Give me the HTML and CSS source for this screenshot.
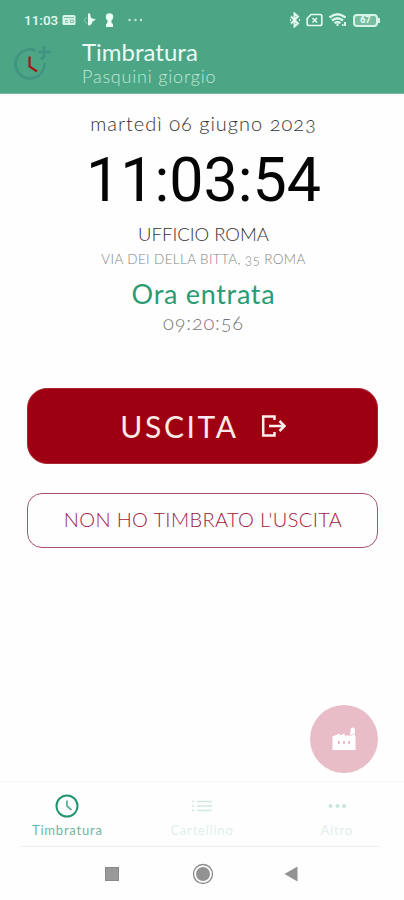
FILE: index.html
```html
<!DOCTYPE html>
<html lang="it">
<head>
    <meta charset="UTF-8">
    <meta name="viewport" content="width=device-width, initial-scale=1.0">
    <title>Timbratura</title>
    <link rel="stylesheet" href="styles.css">
</head>
<body>
    <div class="app">
        <header>
            <div class="status-bar">
                <div class="status-left">
                    <span class="status-time">11:03</span>
                    <svg width="14" height="12" viewBox="0 0 14 12">
                        <rect x="0.5" y="1" width="13" height="10" rx="1.5" fill="#d5f3e6"/>
                        <path d="M2 3.500h10M3 6.500h3M3 8.500h3M8.500 6h3v2.500h-3z" stroke="#7cc0a5" fill="none"/>
                    </svg>
                    <svg class="bird" width="13" height="14" viewBox="0 0 13 14">
                        <path d="M5 0.500l2 0 1 4.500 5 1.500-3.500 2c-.5 3-2.500 4-4.500 4z" fill="#e9fff6"/>
                        <path d="M4 4l-3 3 3 4" stroke="#86c9af" fill="none"/>
                    </svg>
                    <svg class="keyhole" width="9" height="14" viewBox="0 0 9 14">
                        <circle cx="4.500" cy="4" r="3.700" fill="#eafff6"/>
                        <path d="M2.500 6h4v4l1.500 1v3H1v-3l1.500-1z" fill="#eafff6"/>
                    </svg>
                    <svg class="more" width="15" height="4" viewBox="0 0 15 4" fill="#c5ead9">
                        <circle cx="1.500" cy="2" r="1.200"/>
                        <circle cx="7.500" cy="2" r="1.200"/>
                        <circle cx="13" cy="2" r="1.200"/>
                    </svg>
                </div>
                <div class="status-right">
                    <svg width="12" height="16" viewBox="0 0 12 16" fill="none" stroke="#e2faf0" stroke-width="1.900">
                        <path d="M2 4.500l7 7-3.500 3v-13l3.500 3-7 7"/>
                        <path d="M1 8h1M10 8h1"/>
                    </svg>
                    <svg width="17" height="14" viewBox="0 0 17 14" fill="none" stroke="#e2faf0" stroke-width="1.700">
                        <path d="M5 1.500h9q1.800 0 1.800 1.800v7.400q0 1.800-1.800 1.800H3q-1.800 0-1.800-1.800V5.500z"/>
                        <path d="M6.500 5l4.500 4.500M11 5l-4.500 4.500"/>
                    </svg>
                    <svg width="20" height="16" viewBox="0 0 20 16" fill="none" stroke="#dcf7eb" stroke-width="2.300">
                        <path d="M1.500 5.500q8-6.500 16 0M4 8.500q5.500-4.500 11 0M6.500 11.200q3-2.500 6 0"/>
                        <path d="M9.500 11.500v2.500M14 13h1.500M17 10v4" stroke-width="1.900"/>
                    </svg>
                    <div class="battery">67</div>
                </div>
            </div>
            <div class="title-bar">
                <svg class="logo" width="40" height="40" viewBox="0 0 40 40" fill="none">
                    <path d="M22.500 7.500A14.500 14.500 0 1 0 31.500 20" stroke="#3f9580" stroke-width="2.800"/>
                    <path d="M28 14l2 2.500" stroke="#3f9580" stroke-width="2.800"/>
                    <path d="M31 3v12M25 9h13" stroke="#3f9580" stroke-width="2.800"/>
                    <path d="M16.500 13.500v10l7.500 5" stroke="#a01818" stroke-width="2.200"/>
                </svg>
                <div class="titles">
                    <div class="title">Timbratura</div>
                    <div class="user">Pasquini giorgio</div>
                </div>
            </div>
        </header>

        <main>
            <div class="info">
                <div class="date">martedì 06 giugno 2023</div>
                <div class="clock">11:03:54</div>
                <div class="office">UFFICIO ROMA</div>
                <div class="address">VIA DEI DELLA BITTA, 35 ROMA</div>
                <div class="entry-label">Ora entrata</div>
                <div class="entry-time">09:20:56</div>
            </div>

            <button class="btn-exit">
                <span>USCITA</span>
                <svg width="26" height="22" viewBox="0 0 26 22" fill="none" stroke="#ffeeec" stroke-width="2.500">
                    <path d="M13.500 5V1.500H2.200v19H13.500V17"/>
                    <path d="M8 11h15M18.500 6L23.500 11l-5 5"/>
                </svg>
            </button>
            <button class="btn-missed"><span>NON HO TIMBRATO L'USCITA</span></button>

            <div class="fab">
                <svg width="24" height="24" viewBox="0 0 24 24">
                    <path d="M.5 9.500l7-3v2l5-2v2h5.500l.5-5q.2-3 2-3 2.500 0 2.500 3v5l.5 1V23H.5z" fill="#fff"/>
                    <path d="M17 9l6-2" stroke="#ecc4cc" stroke-width=".8"/>
                    <path d="M7 14v3M12 14v3M17 14v3" stroke="#e9bdc7" stroke-width="2"/>
                </svg>
            </div>
        </main>

        <nav class="tabs">
            <div class="tab active">
                <svg width="24" height="24" viewBox="0 0 24 24" fill="none" stroke="#259570">
                    <circle cx="12" cy="12" r="10.500" stroke-width="2"/>
                    <path d="M12 6.500V12l4.500 4" stroke="#5eb296" stroke-width="1.800"/>
                </svg>
                <span>Timbratura</span>
            </div>
            <div class="tab">
                <svg width="24" height="24" viewBox="0 0 24 24" stroke="#d2e9e1" stroke-width="1.600">
                    <path d="M2 7.500h2M2 12h2M2 16.500h2M7 7.500h15M7 12h15M7 16.500h15"/>
                </svg>
                <span>Cartellino</span>
            </div>
            <div class="tab">
                <svg width="24" height="24" viewBox="0 0 24 24" fill="#c9e4dc">
                    <circle cx="5.500" cy="12" r="2"/>
                    <circle cx="12.500" cy="12" r="2"/>
                    <circle cx="19" cy="12" r="2"/>
                </svg>
                <span>Altro</span>
            </div>
        </nav>

        <div class="system-nav">
            <svg width="22" height="22" viewBox="0 0 22 22">
                <rect x="4.500" y="4.500" width="13" height="13" fill="#999" stroke="#888"/>
            </svg>
            <svg width="22" height="22" viewBox="0 0 22 22">
                <circle cx="11" cy="11" r="9.500" fill="none" stroke="#8a8a8a" stroke-width="1.300"/>
                <circle cx="11" cy="11" r="7" fill="#929292"/>
            </svg>
            <svg width="22" height="22" viewBox="0 0 22 22">
                <path d="M14.500 3.500v15L1.500 11z" fill="#929292"/>
            </svg>
        </div>
    </div>
</body>
</html>
```
FILE: styles.css
```css
* {
    box-sizing: border-box;
}
body {
    margin: 0;
    background: #fefefe;
    font-family: Lato, "Open Sans", sans-serif;
}
.app {
    display: flex;
    flex-direction: column;
    width: 404px;
    height: 900px;
    overflow: hidden;
}
svg {
    display: block;
    flex-shrink: 0;
}
header {
    height: 94px;
    background: #4ca685;
    border-bottom: 1px solid #79bda3;
}
.status-bar {
    display: flex;
    justify-content: space-between;
    align-items: center;
    height: 40px;
    padding: 0 26px 0 24px;
}
.status-left, .status-right {
    display: flex;
    align-items: center;
}
.status-time {
    width: 38px;
    font: 500 13.5px Roboto, sans-serif;
    color: #e5fbf2;
}
.bird {
    margin-left: 7px;
}
.keyhole {
    margin-left: 9px;
}
.more {
    margin-left: 14px;
}
.status-right {
    gap: 5px;
}
.battery {
    position: relative;
    width: 25px;
    height: 13px;
    border: 2px solid #d6f4e7;
    border-radius: 4px;
    background: #76bd9f;
    font: bold 9px/9px Roboto, sans-serif;
    text-align: center;
    color: #e8fff6;
}
.battery::after {
    content: "";
    position: absolute;
    right: -4px;
    top: 2px;
    width: 2px;
    height: 5px;
    background: #d6f4e7;
}
.title-bar {
    display: flex;
    padding-left: 13px;
}
.logo {
    margin-top: 3px;
}
.titles {
    padding-left: 29px;
}
.title {
    height: 26px;
    font-size: 24px;
    line-height: 23px;
    color: #e9fbf4;
    white-space: nowrap;
}
.user {
    font-size: 18px;
    line-height: 20px;
    letter-spacing: 0.8px;
    color: #c3e8d9;
    font-weight: 300;
    white-space: nowrap;
}
main {
    position: relative;
    display: flex;
    flex-direction: column;
    align-items: center;
    height: 687px;
    text-align: center;
    white-space: nowrap;
}
.info {
    padding: 15px 0 0 3px;
}
.date {
    font-size: 20px;
    line-height: 28px;
    font-weight: 300;
    letter-spacing: 1px;
    font-variant-numeric: oldstyle-nums;
    color: #333;
}
.clock {
    height: 84px;
    font-family: Roboto, sans-serif;
    font-size: 61px;
    line-height: 86px;
    color: #050505;
}
.office {
    font-size: 18.5px;
    line-height: 26px;
    font-weight: 300;
    color: #333;
}
.address {
    font-size: 13.5px;
    line-height: 24px;
    font-weight: 300;
    letter-spacing: 0.37px;
    font-variant-numeric: oldstyle-nums;
    color: #858585;
}
.entry-label {
    margin-top: 6px;
    font-size: 27px;
    line-height: 34px;
    letter-spacing: 0.7px;
    color: #2a9b72;
}
.entry-time {
    font-size: 20px;
    line-height: 22px;
    font-weight: 300;
    letter-spacing: 0.8px;
    font-variant-numeric: oldstyle-nums;
    color: #777;
}
.btn-exit, .btn-missed {
    display: flex;
    justify-content: center;
    align-items: center;
    width: 351px;
    padding: 0;
    font-family: inherit;
}
.btn-exit {
    gap: 22px;
    height: 76px;
    margin-top: 55px;
    padding-left: 3px;
    padding-bottom: 1px;
    border: 1px solid #ab2432;
    border-radius: 20px;
    background: #9e0012;
    font-size: 30px;
    letter-spacing: 2.6px;
    color: #ffeae7;
}
.btn-missed {
    height: 55px;
    margin-top: 29px;
    padding-left: 2px;
    padding-bottom: 3px;
    border: 1px solid #aa5268;
    border-radius: 15px;
    background: #fefefe;
    font-size: 20px;
    font-weight: 300;
    letter-spacing: 0.35px;
    color: #a0213e;
}
.fab {
    position: absolute;
    right: 26px;
    bottom: 8px;
    display: flex;
    justify-content: center;
    align-items: center;
    width: 68px;
    height: 68px;
    border-radius: 50%;
    background: #e9bdc7;
}
.tabs {
    display: flex;
    height: 66px;
    border-top: 1px solid #f7f7f7;
    position: relative;
}
.tabs::after {
    content: "";
    position: absolute;
    left: 20px;
    right: 24px;
    bottom: 0;
    height: 1px;
    background: #efefef;
}
.tab {
    display: flex;
    flex: 1;
    flex-direction: column;
    align-items: center;
    padding-top: 12px;
    font-size: 13px;
    line-height: 24px;
    letter-spacing: 0.8px;
    color: #e2efeb;
}
.tab.active {
    color: #6db79e;
}
.system-nav {
    display: flex;
    justify-content: center;
    gap: 69px;
    padding: 16px 0 0 2px;
}
```
